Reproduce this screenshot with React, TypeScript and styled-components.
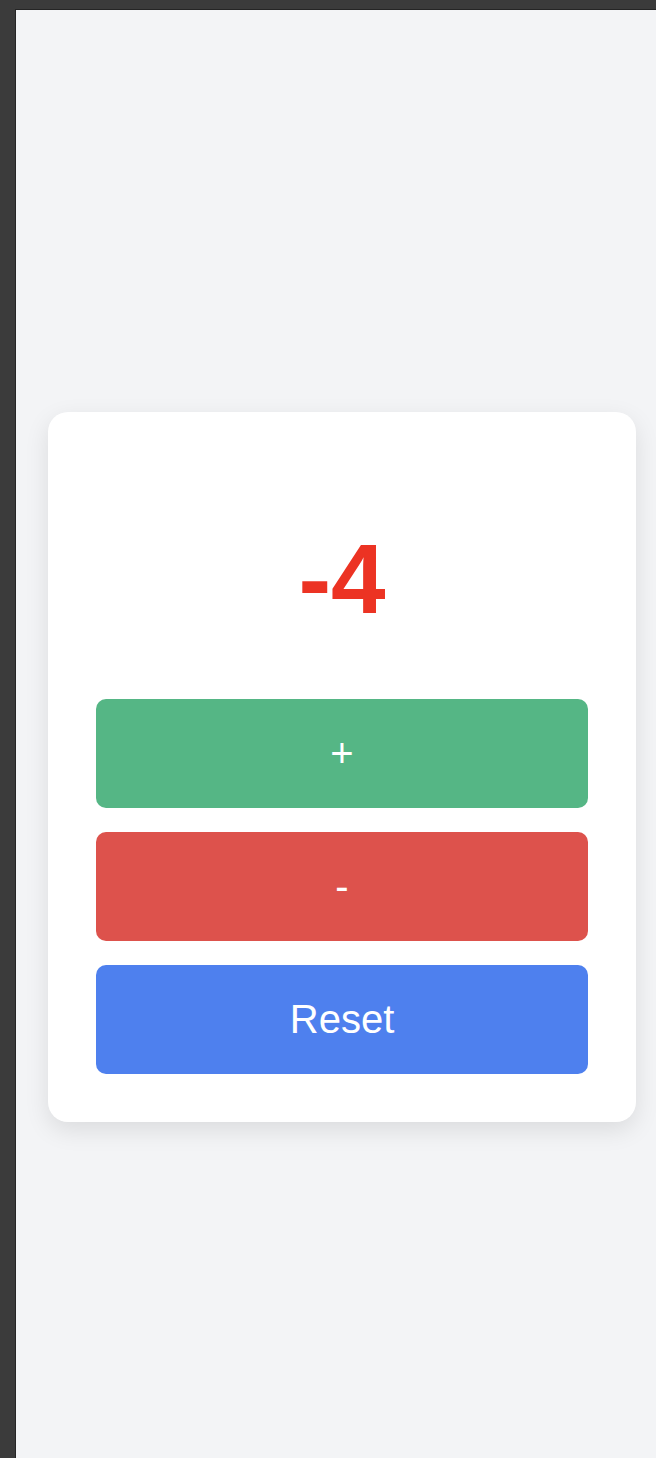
import React, { useState } from "react";
import styled, { createGlobalStyle } from "styled-components";

const GlobalStyle = createGlobalStyle`
  *, *::before, *::after { box-sizing: border-box; }
  body {
    margin: 0;
    font-family: "Liberation Sans", Arial, sans-serif;
  }
`;

const Backdrop = styled.div`
  display: flex;
  min-height: 100vh;
  padding: 10px 0 0 16px;
  background: #3b3b3b;
`;

const Screen = styled.main`
  flex: 1;
  display: flex;
  align-items: center;
  padding: 66px 20px 0 32px;
  background: #f3f4f6;
  box-shadow: 0 0 0 1px #252525;
`;

const Card = styled.section`
  flex: 1;
  display: flex;
  flex-direction: column;
  padding: 48px;
  border-radius: 20px;
  background: #ffffff;
  box-shadow: 0 8px 24px rgba(0, 0, 0, 0.1);
`;

const Count = styled.h1<{ $negative: boolean }>`
  margin: 64px 0;
  font-size: 98px;
  line-height: 111px;
  text-align: center;
  color: ${(p) => (p.$negative ? "#ec3323" : "#333333")};
`;

const Actions = styled.div`
  display: flex;
  flex-direction: column;
  gap: 24px;
`;

const ActionButton = styled.button<{ $color: string }>`
  height: 109px;
  border: 0;
  border-radius: 10px;
  background: ${(p) => p.$color};
  color: #ffffff;
  font-family: inherit;
  font-size: 40px;
  cursor: pointer;
`;

export default function App() {
  const [count, setCount] = useState(-4);
  return (
    <>
      <GlobalStyle />
      <Backdrop>
        <Screen>
          <Card>
            <Count $negative={count < 0}>{count}</Count>
            <Actions>
              <ActionButton type="button" $color="#55b685" onClick={() => setCount(count + 1)}>+</ActionButton>
              <ActionButton type="button" $color="#dd524c" onClick={() => setCount(count - 1)}>-</ActionButton>
              <ActionButton type="button" $color="#4e80ee" onClick={() => setCount(0)}>Reset</ActionButton>
            </Actions>
          </Card>
        </Screen>
      </Backdrop>
    </>
  );
}
